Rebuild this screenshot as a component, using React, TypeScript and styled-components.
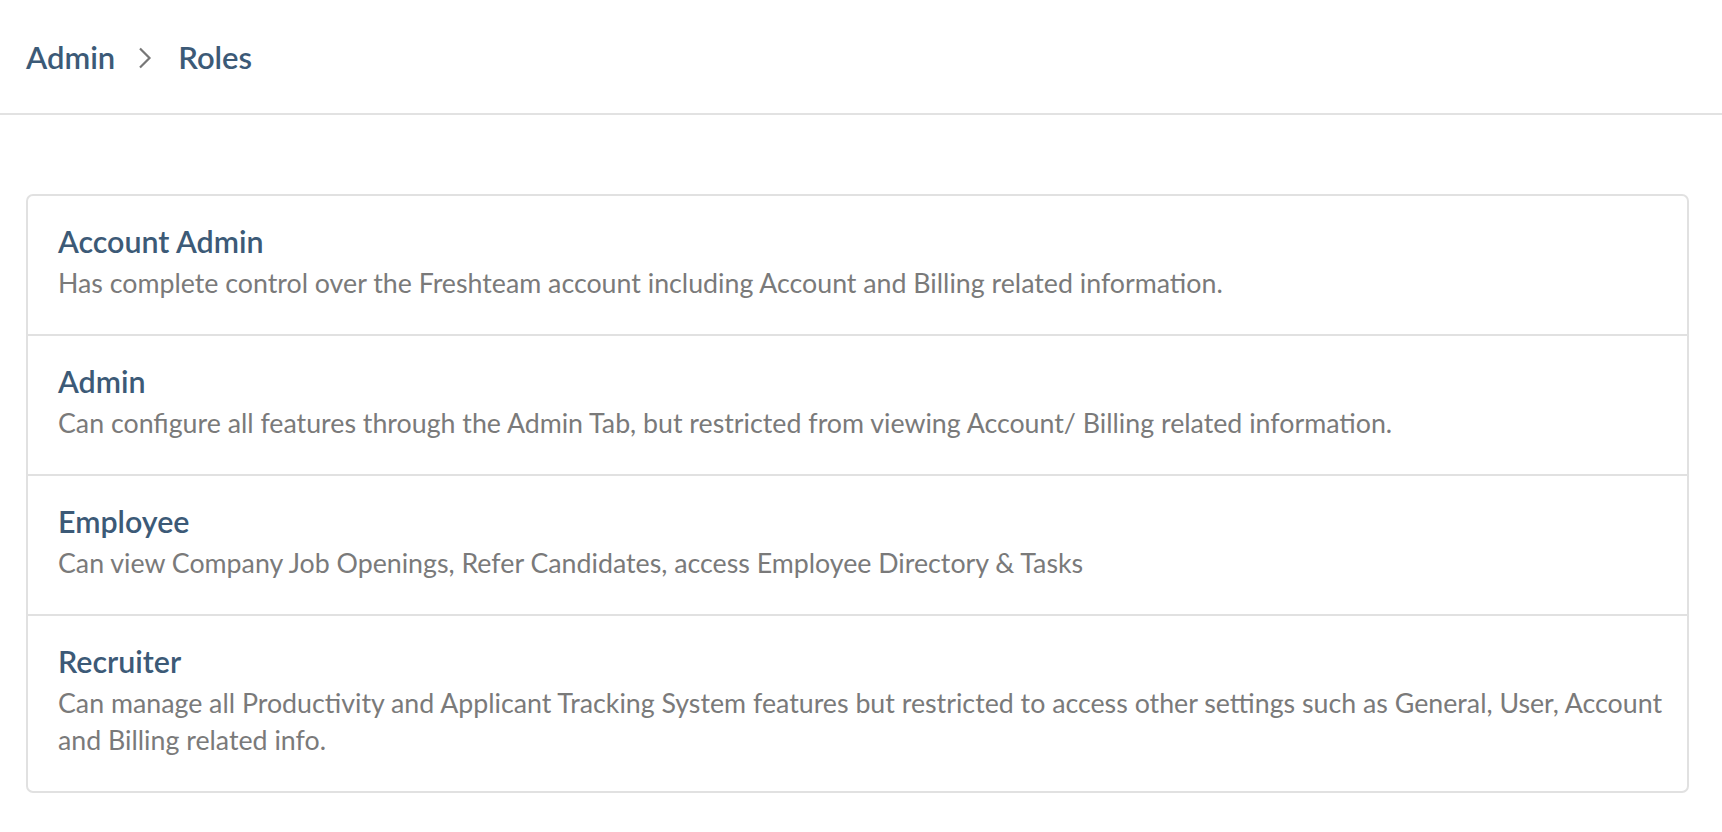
import React from 'react';
import styled, { createGlobalStyle } from 'styled-components';

const GlobalStyle = createGlobalStyle`
    body {
        margin: 0;
        background: #ffffff;
        font-family: "Source Sans Pro", Lato, "Noto Sans", sans-serif;
    }
`

const Header = styled.div`
    display: flex;
    align-items: center;
    height: 113px;
    padding-left: 26px;
    border-bottom: 2px solid #e2e2e2;
`
const Crumb = styled.span`
    font-size: 31px;
    font-weight: 600;
    color: #3c5a77;
`
const Chevron = styled.span`
    display: flex;
    margin: 2px 26px 0 23px;
    color: #777777;
`
const Main = styled.div`
    padding: 79px 33px 40px 26px;
`
const Card = styled.div`
    border: 2px solid #e1e1e1;
    border-radius: 7px;
`
const Row = styled.div`
    padding: 25px 8px 32px 30px;
    border-bottom: ${props => props.last ? 'none' : '2px solid #e1e1e1'};
`
const RoleTitle = styled.div`
    font-size: 30.4px;
    line-height: 40px;
    font-weight: 600;
    color: #3c5a77;
    margin-bottom: 4px;
`
const RoleDesc = styled.div`
    font-size: 26.75px;
    line-height: 37px;
    color: #7a7a7a;
`

type Role = {
    name: string;
    desc: string;
}

const roles: Role[] = [
    { name: 'Account Admin', desc: 'Has complete control over the Freshteam account including Account and Billing related information.' },
    { name: 'Admin', desc: 'Can configure all features through the Admin Tab, but restricted from viewing Account/ Billing related information.' },
    { name: 'Employee', desc: 'Can view Company Job Openings, Refer Candidates, access Employee Directory & Tasks' },
    { name: 'Recruiter', desc: 'Can manage all Productivity and Applicant Tracking System features but restricted to access other settings such as General, User, Account and Billing related info.' },
]

export default function App() {
    return (
        <>
            <GlobalStyle />
            <Header>
                <Crumb>Admin</Crumb>
                <Chevron>
                    <svg width="14" height="22" viewBox="0 0 14 22" fill="none">
                        <path d="M2 1.5 L11.5 11 L2 20.5" stroke="currentColor" strokeWidth="2.2" />
                    </svg>
                </Chevron>
                <Crumb>Roles</Crumb>
            </Header>
            <Main>
                <Card>
                    {roles.map((r, i) => (
                        <Row key={r.name} last={i === roles.length - 1}>
                            <RoleTitle>{r.name}</RoleTitle>
                            <RoleDesc>{r.desc}</RoleDesc>
                        </Row>
                    ))}
                </Card>
            </Main>
        </>
    )
}
